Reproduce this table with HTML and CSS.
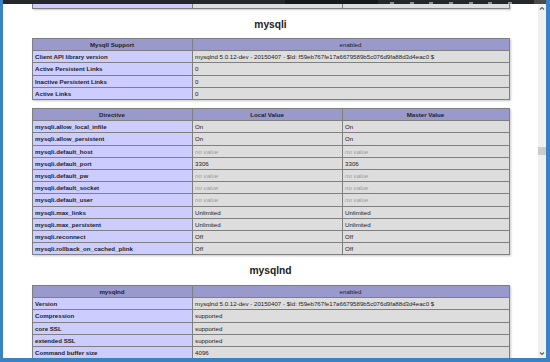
FILE: index.html
```html
<!DOCTYPE html>
<html>
<head>
<meta charset="utf-8">
<title>phpinfo()</title>
<link rel="stylesheet" href="styles.css">
</head>
<body>
<div class="window">
  <div class="titlebar">
    <span class="tb-gap"></span>
    <span class="tb-field"></span>
    <span class="tb-icons">
      <i></i><i></i><i></i><i></i><i></i><i></i><i></i>
    </span>
    <span class="tb-end"></span>
  </div>
  <div class="client">
    <div class="page">
      <table class="prev">
        <colgroup><col class="c-e"><col class="c-l"><col></colgroup>
        <tr><td class="e"></td><td class="v"></td><td class="v"></td></tr>
      </table>

      <h2>mysqli</h2>
      <table>
        <colgroup><col class="c-e"><col></colgroup>
        <tr class="h"><th>MysqlI Support</th><th class="light">enabled</th></tr>
        <tr><td class="e">Client API library version</td><td class="v">mysqlnd 5.0.12-dev - 20150407 - $Id: f59eb767fe17a6679589b5c076d9fa88d3d4eac0 $</td></tr>
        <tr><td class="e">Active Persistent Links</td><td class="v">0</td></tr>
        <tr><td class="e">Inactive Persistent Links</td><td class="v">0</td></tr>
        <tr><td class="e">Active Links</td><td class="v">0</td></tr>
      </table>
      <table>
        <colgroup><col class="c-e"><col class="c-l"><col></colgroup>
        <tr class="h"><th>Directive</th><th>Local Value</th><th>Master Value</th></tr>
        <tr><td class="e">mysqli.allow_local_infile</td><td class="v">On</td><td class="v">On</td></tr>
        <tr><td class="e">mysqli.allow_persistent</td><td class="v">On</td><td class="v">On</td></tr>
        <tr><td class="e">mysqli.default_host</td><td class="v"><i>no value</i></td><td class="v"><i>no value</i></td></tr>
        <tr><td class="e">mysqli.default_port</td><td class="v">3306</td><td class="v">3306</td></tr>
        <tr><td class="e">mysqli.default_pw</td><td class="v"><i>no value</i></td><td class="v"><i>no value</i></td></tr>
        <tr><td class="e">mysqli.default_socket</td><td class="v"><i>no value</i></td><td class="v"><i>no value</i></td></tr>
        <tr><td class="e">mysqli.default_user</td><td class="v"><i>no value</i></td><td class="v"><i>no value</i></td></tr>
        <tr><td class="e">mysqli.max_links</td><td class="v">Unlimited</td><td class="v">Unlimited</td></tr>
        <tr><td class="e">mysqli.max_persistent</td><td class="v">Unlimited</td><td class="v">Unlimited</td></tr>
        <tr><td class="e">mysqli.reconnect</td><td class="v">Off</td><td class="v">Off</td></tr>
        <tr><td class="e">mysqli.rollback_on_cached_plink</td><td class="v">Off</td><td class="v">Off</td></tr>
      </table>

      <h2>mysqlnd</h2>
      <table>
        <colgroup><col class="c-e"><col></colgroup>
        <tr class="h"><th>mysqlnd</th><th class="light">enabled</th></tr>
        <tr><td class="e">Version</td><td class="v">mysqlnd 5.0.12-dev - 20150407 - $Id: f59eb767fe17a6679589b5c076d9fa88d3d4eac0 $</td></tr>
        <tr><td class="e">Compression</td><td class="v">supported</td></tr>
        <tr><td class="e">core SSL</td><td class="v">supported</td></tr>
        <tr><td class="e">extended SSL</td><td class="v">supported</td></tr>
        <tr><td class="e">Command buffer size</td><td class="v">4096</td></tr>
      </table>
    </div>
    <div class="scrollbar">
      <svg class="arrow" width="8" height="9" viewBox="0 0 8 9"><path d="M2 5.5 L4 3.5 L6 5.5" fill="none" stroke="#606060" stroke-width="1.1"/></svg>
      <div class="track"><div class="thumb"></div></div>
      <svg class="arrow" width="8" height="9" viewBox="0 0 8 9"><path d="M2 3.5 L4 5.5 L6 3.5" fill="none" stroke="#606060" stroke-width="1.1"/></svg>
    </div>
  </div>
</div>
</body>
</html>
```

FILE: styles.css
```css
html, body {
  margin: 0;
  padding: 0;
}
body {
  width: 550px;
  height: 362px;
  overflow: hidden;
  background: #fff;
  font-family: "Liberation Sans", Arial, sans-serif;
  color: #222;
}
.window {
  box-sizing: border-box;
  height: 362px;
  display: flex;
  flex-direction: column;
  border-left: 3px solid #3a82c0;
  border-right: 4px solid #3a82c0;
  border-bottom: 4px solid #3a82c0;
}
.titlebar {
  height: 4px;
  flex: none;
  background: #26272a;
  display: flex;
}
.tb-gap {
  width: 282px;
}
.tb-field {
  width: 93px;
  background: #18191a;
}
.tb-icons {
  flex: 1;
  display: flex;
  justify-content: space-around;
  align-items: flex-end;
  padding: 0 14px 0 4px;
}
.tb-icons i {
  width: 4px;
  height: 2px;
  background: #8c8c8c;
}
.tb-end {
  width: 12px;
  background: #4a4a4c;
}
.client {
  flex: 1;
  min-height: 0;
  display: flex;
}
.page {
  flex: 1;
  overflow: hidden;
  background: #fff;
}
.scrollbar {
  width: 8px;
  flex: none;
  background: #f0f0f0;
  display: flex;
  flex-direction: column;
}
.arrow {
  display: block;
  flex: none;
}
.track {
  flex: 1;
  padding-top: 134px;
}
.thumb {
  height: 8px;
  background: #cdcdcd;
}

table {
  border-collapse: collapse;
  table-layout: fixed;
  width: 478px;
  margin: 0 auto 8px;
  box-shadow: 1px 1px 2px #c8c8c8;
}
.c-e { width: 160px; }
.c-l { width: 150px; }
td, th {
  border: 1px solid #7f7f7f;
  font-size: 6.14px;
  height: 11.2px;
  line-height: 11.2px;
  padding: 0 2.6px;
  white-space: nowrap;
  overflow: hidden;
  vertical-align: middle;
  text-align: left;
}
.h th {
  background: #99c;
  font-weight: bold;
  text-align: center;
}
.h th.light {
  font-weight: normal;
}
.e {
  background: #ccf;
  font-weight: bold;
}
.v {
  background: #ddd;
}
.v i {
  color: #999;
}
.prev td {
  height: 3.5px;
  line-height: 3.5px;
  border-top: 0;
}
h2 {
  font-size: 10.24px;
  font-weight: bold;
  line-height: 12.5px;
  margin: 10px 0 7px;
  text-align: center;
}
```
